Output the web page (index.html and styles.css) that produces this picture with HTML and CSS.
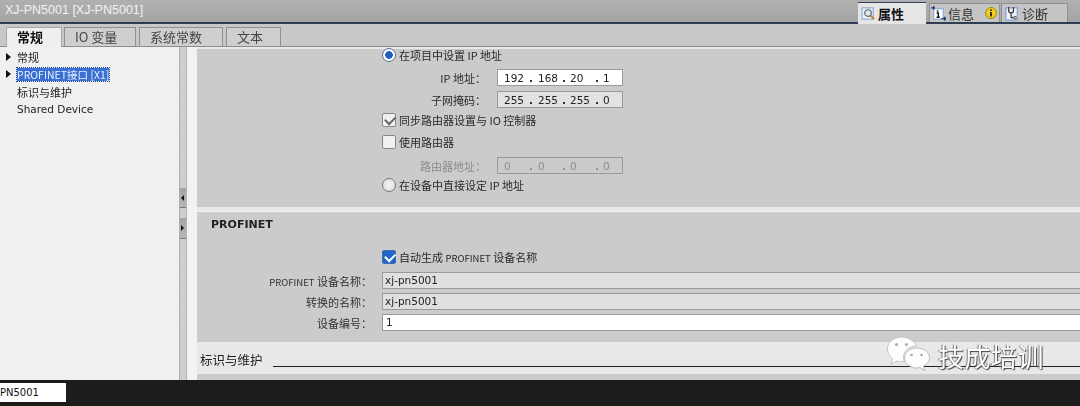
FILE: index.html
```html
<!DOCTYPE html>
<html lang="zh">
<head>
<meta charset="utf-8">
<title>XJ-PN5001</title>
<link rel="stylesheet" href="styles.css">
</head>
<body>
<div class="app">
  <header class="titlebar">
    <div class="title">XJ-PN5001 [XJ-PN5001]</div>
    <div class="viewtabs">
      <div class="viewtab active">
        <svg class="vicon" viewBox="0 0 16 16"><rect x="1" y="2" width="12" height="12" fill="#e8f0fa" stroke="#7fa0d0"/><circle cx="7.5" cy="7.5" r="3.5" fill="#dfe8ee" stroke="#666" stroke-width="1.3"/><path d="M10 10l4 4" stroke="#c08020" stroke-width="2"/></svg>
        <span>属性</span>
      </div>
      <div class="viewtab">
        <svg class="vicon" viewBox="0 0 16 16"><rect x="3" y="3" width="10" height="11" fill="#fff" stroke="#7fa0d0"/><path d="M0 2h4M3 0v4" stroke="#123a80" stroke-width="1.4"/><path d="M7 4.500v1.600M6 7.500h1.800v4.500M6 12h3.400" stroke="#111" stroke-width="1.500" fill="none"/><path d="M11 13.500h4.500M14 11.500l2 2-2 2" stroke="#123a80" stroke-width="1.200" fill="none"/></svg>
        <span>信息</span>
        <svg class="badge" viewBox="0 0 12 12"><circle cx="6" cy="6" r="5.500" fill="#f0cc20" stroke="#a08810"/><path d="M6 2.500v1.500M6 5v4.500" stroke="#111" stroke-width="1.600"/></svg>
      </div>
      <div class="viewtab">
        <svg class="vicon" viewBox="0 0 16 16"><rect x="1" y="2" width="12" height="13" fill="#eef3fb" stroke="#6f90d0"/><path d="M4 1v5a3 3 0 0 0 5 0V1M6.500 8v4.500h3" stroke="#333" stroke-width="1.300" fill="none"/><circle cx="10.500" cy="12.500" r="1.500" fill="#d8d8d8" stroke="#444"/></svg>
        <span>诊断</span>
      </div>
    </div>
  </header>

  <nav class="tabs">
    <div class="tab selected">常规</div>
    <div class="tab t2">IO 变量</div>
    <div class="tab t3">系统常数</div>
    <div class="tab t4">文本</div>
  </nav>

  <main class="body">
    <aside class="tree">
      <div class="row"><i class="arrow"></i><span>常规</span></div>
      <div class="row"><i class="arrow"></i><span class="hl">PROFINET接口 [X1]</span></div>
      <div class="row"><span>标识与维护</span></div>
      <div class="row"><span class="latin">Shared Device</span></div>
      <div class="row"></div>
      <div class="row"></div>
      <div class="row"></div>
      <div class="row"></div>
      <div class="row"></div>
      <div class="row"></div>
      <div class="row"></div>
      <div class="row"></div>
      <div class="row"></div>
      <div class="row"></div>
      <div class="row"></div>
      <div class="row"></div>
    </aside>
    <div class="scroll">
      <button class="sbtn first"><i class="tl"></i></button>
      <button class="sbtn second"><i class="tr"></i></button>
    </div>
    <div class="gutter"></div>
    <section class="content">
      <div class="panel ip">
        <div class="line choice"><i class="radio on"></i><span>在项目中设置 IP 地址</span></div>
        <div class="line field l2"><label>IP 地址：</label><div class="ipbox white"><b>192</b><em>.</em><b>168</b><em>.</em><b>20</b><em>.</em><b>1</b></div></div>
        <div class="line field l3"><label>子网掩码：</label><div class="ipbox"><b>255</b><em>.</em><b>255</b><em>.</em><b>255</b><em>.</em><b>0</b></div></div>
        <div class="line choice l4"><i class="check grey"></i><span>同步路由器设置与 IO 控制器</span></div>
        <div class="line choice l5"><i class="check"></i><span>使用路由器</span></div>
        <div class="line field l6 off"><label>路由器地址：</label><div class="ipbox dis"><b>0</b><em>.</em><b>0</b><em>.</em><b>0</b><em>.</em><b>0</b></div></div>
        <div class="line choice l7"><i class="radio"></i><span>在设备中直接设定 IP 地址</span></div>
      </div>
      <div class="panel pn">
        <h2>PROFINET</h2>
        <div class="line choice auto"><i class="check blue"></i><span>自动生成 <small>PROFINET</small> 设备名称</span></div>
        <div class="line wide n1"><label><small>PROFINET</small> 设备名称：</label><div class="txt">xj-pn5001</div></div>
        <div class="line wide n2"><label>转换的名称：</label><div class="txt">xj-pn5001</div></div>
        <div class="line wide n3"><label>设备编号：</label><div class="txt white">1</div></div>
      </div>
      <div class="sect"><span>标识与维护</span><hr></div>
      <div class="panel tail"></div>
    </section>
  </main>

  <footer class="status"><div class="namebox">PN5001</div></footer>

  <div class="mark">
    <svg class="wx" viewBox="0 0 44 40"><path d="M15 1C7 1 1 6.500 1 13c0 4 2 7 5 9.500L4.500 28l6-3c1.500.4 3 .6 4.500.6 1 0 1.500 0 2.500-.2C17 24 17 22.500 17 21c0-6.500 6-11 13-11C28 5 22 1 15 1z" fill="#fdfdfd" stroke="#aaa" stroke-width=".6"/><path d="M30 12c-6.500 0-12 4.500-12 10s5.500 10 12 10c1.500 0 2.500-.2 3.500-.5l5 3-1.300-4.500c3.500-2 5.800-4.800 5.800-8 0-5.500-5.500-10-13-10z" fill="#fdfdfd" stroke="#999" stroke-width=".6"/><circle cx="10" cy="8.500" r="1.500" fill="#aaa"/><circle cx="20" cy="8.500" r="1.500" fill="#aaa"/><circle cx="25" cy="19" r="1.300" fill="#aaa"/><circle cx="35" cy="19" r="1.300" fill="#aaa"/></svg>
    <span>技成培训</span>
  </div>
</div>
</body>
</html>
```

FILE: styles.css
```css
* { box-sizing: border-box; }
html, body { margin: 0; padding: 0; }
body { width: 1080px; height: 406px; overflow: hidden; font-family: "DejaVu Sans", "Noto Sans CJK SC", sans-serif; font-size: 10.5px; color: #222; background: #e8e8e8; }
.app { position: relative; width: 1080px; height: 406px; display: flex; flex-direction: column; overflow: hidden; filter: blur(.3px); }
small { font-size: 9.5px; }

.titlebar { height: 24px; flex: none; display: flex; justify-content: space-between; background: linear-gradient(#b0b0b0, #a4a4a4); border-bottom: 2px solid #2f3d52; }
.title { padding: 3px 0 0 5px; font-family: "Liberation Sans", sans-serif; font-size: 12.5px; color: #f2f2f2; letter-spacing: 0; }
.viewtabs { display: flex; align-items: flex-end; gap: 1px; margin-right: 12px; height: 22px; }
.viewtab { height: 19px; display: flex; align-items: center; gap: 2px; padding: 0 0 0 1px; background: #c4c4c4; border: 1px solid #8f8f8f; border-bottom: 0; font-family: "Noto Sans CJK SC", sans-serif; font-size: 13px; color: #333; width: 71px; white-space: nowrap; }
.viewtab:last-child { width: 67px; padding-left: 3px; }
.viewtab.active { width: 68px; height: 22px; margin-bottom: -2px; padding-left: 3px; background: #e6e6e6; border: 0; border-top: 1px solid #31425c; color: #111; font-weight: 700; }
.viewtab.active + .viewtab { margin-left: 2px; }
.vicon { width: 15px; height: 15px; flex: none; }
.badge { width: 12px; height: 12px; margin-left: 9px; flex: none; }

.tabs { height: 23px; flex: none; display: flex; align-items: flex-end; gap: 3px; padding: 3px 0 0 6px; background: #c8c8c8; border-bottom: 1px solid #8d8d8d; }
.tab { height: 19px; display: flex; align-items: center; padding: 0 0 2px 10px; background: #cfcfcf; border: 1px solid #909090; border-bottom: 0; font-family: "Noto Sans CJK SC", sans-serif; font-size: 13px; color: #444; white-space: nowrap; }
.tab.selected { width: 56px; height: 20px; margin-bottom: -1px; background: #efefef; color: #111; font-weight: 700; border-color: #a8a8a8; }
.tab.t2 { width: 72px; margin-left: -1px; }
.tab.t3 { width: 84px; }
.tab.t4 { width: 55px; }

.body { flex: 1; min-height: 0; display: flex; }
.tree { width: 179px; flex: none; background: #f0f0f0; padding-top: 2px; overflow: hidden; }
.row { height: 17.300px; display: flex; align-items: center; padding-left: 17px; position: relative; border-bottom: 1px solid #eeeeee; color: #222; font-family: "Noto Sans CJK SC", sans-serif; font-size: 11px; white-space: nowrap; }
.row .latin { font-family: "DejaVu Sans", sans-serif; font-size: 10.500px; }
.arrow { position: absolute; left: 6px; top: 4px; width: 0; height: 0; border-left: 5px solid #111; border-top: 4px solid transparent; border-bottom: 4px solid transparent; }
.hl { background: #3a70d2; color: #e8f0ff; padding: 0; height: 13px; line-height: 13px; font-size: 10.500px; outline: 1px dotted #1c3f90; }

.scroll { width: 8px; flex: none; background: #cfcfcf; border-left: 1px solid #b0b0b0; border-right: 1px solid #b4b4b4; display: flex; flex-direction: column; padding-top: 141px; }
.sbtn { width: 6px; height: 20px; padding: 0; border: 0; background: linear-gradient(#a4a4a4, #b8b8b8); border-bottom: 1px solid #777; position: relative; }
.sbtn.second { margin-top: 10px; height: 21px; }
.tl, .tr { position: absolute; left: 1px; top: 7px; width: 0; height: 0; border-top: 3px solid transparent; border-bottom: 3px solid transparent; }
.tl { border-right: 3px solid #111; }
.tr { border-left: 3px solid #111; }
.gutter { width: 10px; flex: none; background: #f2f2f2; }

.content { flex: 1; min-width: 0; background: #e8e8e8; display: flex; flex-direction: column; overflow: hidden; }
.panel { background: #cbcbcb; }
.panel.ip { height: 158px; margin-top: 2px; padding-top: 0; }
.panel.pn { height: 131px; margin-top: 4px; border-top: 1px solid #f2f2f2; }
.panel.tail { flex: 1; margin-top: 1px; }

.line { display: flex; align-items: center; height: 16px; font-family: "Noto Sans CJK SC", sans-serif; font-size: 11px; color: #2a2a2a; white-space: nowrap; }
.choice { padding-left: 185px; gap: 3px; margin-top: -2px; }
.field { padding-left: 180px; }
.field label { width: 120px; padding-right: 11px; text-align: right; }
.field.l2 { margin-top: 6px; height: 17px; }
.field.l3 { margin-top: 5px; height: 17px; }
.choice.l4 { margin-top: 4px; }
.choice.l5 { margin-top: 6px; }
.field.l6 { margin-top: 7px; height: 17px; }
.choice.l7 { margin-top: 3px; }
.off label { color: #8c8c8c; }

.radio { width: 14px; height: 14px; flex: none; border-radius: 50%; background: radial-gradient(#f4f4f4, #dcdcdc); border: 1px solid #777; }
.radio.on { background: radial-gradient(circle, #1c5fc0 0 3.500px, #fff 4px); border-color: #4f6f9c; }
.check { width: 14px; height: 14px; flex: none; border: 1px solid #888; border-radius: 2px; background: #f0f0f0; position: relative; }
.check.grey::after, .check.blue::after { content: ""; position: absolute; left: 2px; top: 2px; width: 8px; height: 4.500px; border-left: 2px solid #666; border-bottom: 2px solid #666; transform: rotate(-45deg); }
.check.blue { background: #1f66c8; border-color: #3d6eb0; }
.check.blue::after { border-color: #fff; }

.ipbox { width: 126px; height: 17px; flex: none; display: grid; grid-template-columns: 25px 9px 24px 8px 25px 8px 15px; align-items: center; padding-left: 6px; background: #e2e2e2; border: 1px solid #9a9a9a; font-family: "DejaVu Sans", sans-serif; font-size: 10.500px; color: #222; }
.ipbox b, .ipbox em { font-weight: 400; font-style: normal; }
.ipbox em { font-weight: 700; }
.ipbox.white { background: #fff; }
.ipbox.dis { background: #cbcbcb; color: #8c8c8c; }

h2 { margin: 0; padding: 5px 0 0 14px; height: 33px; font-family: "DejaVu Sans", sans-serif; font-size: 11px; font-weight: 700; color: #222; line-height: 16px; }
.choice.auto { margin-top: 4px; }
.wide { height: 17px; margin-top: 4px; padding-left: 0; }
.wide.n1 { margin-top: 7px; }
.wide label { width: 175px; padding-right: 0; text-align: right; color: #333; }
.wide .txt { margin-left: 10px; flex: 1; min-width: 0; height: 17px; line-height: 15px; padding-left: 2px; background: #e0e0e0; border: 1px solid #9a9a9a; border-right: 0; font-family: "DejaVu Sans", sans-serif; font-size: 10.500px; color: #222; }
.wide .txt.white { background: #fff; padding-left: 3px; }

.sect { height: 31px; flex: none; display: flex; align-items: center; padding: 3px 0 0 3px; gap: 10px; font-family: "Noto Sans CJK SC", sans-serif; font-size: 12.500px; color: #222; }
.sect hr { flex: 1; height: 1px; margin: 14px 0 0; border: 0; background: #222; }

.status { height: 26px; flex: none; background: #1c1c1c; padding-top: 3px; }
.namebox { width: 66px; height: 19px; line-height: 19px; background: #fff; font-family: "DejaVu Sans", sans-serif; font-size: 10px; color: #111; }

.mark { position: absolute; left: 886px; top: 336px; display: flex; align-items: center; gap: 7px; }
.wx { width: 45px; height: 40px; flex: none; }
.mark span { font-family: "Noto Sans CJK SC", sans-serif; font-size: 26px; line-height: 40px; color: #fff; letter-spacing: .5px; text-shadow: 1px 1px 1px #444, -1px 0 1px #777; }
```
